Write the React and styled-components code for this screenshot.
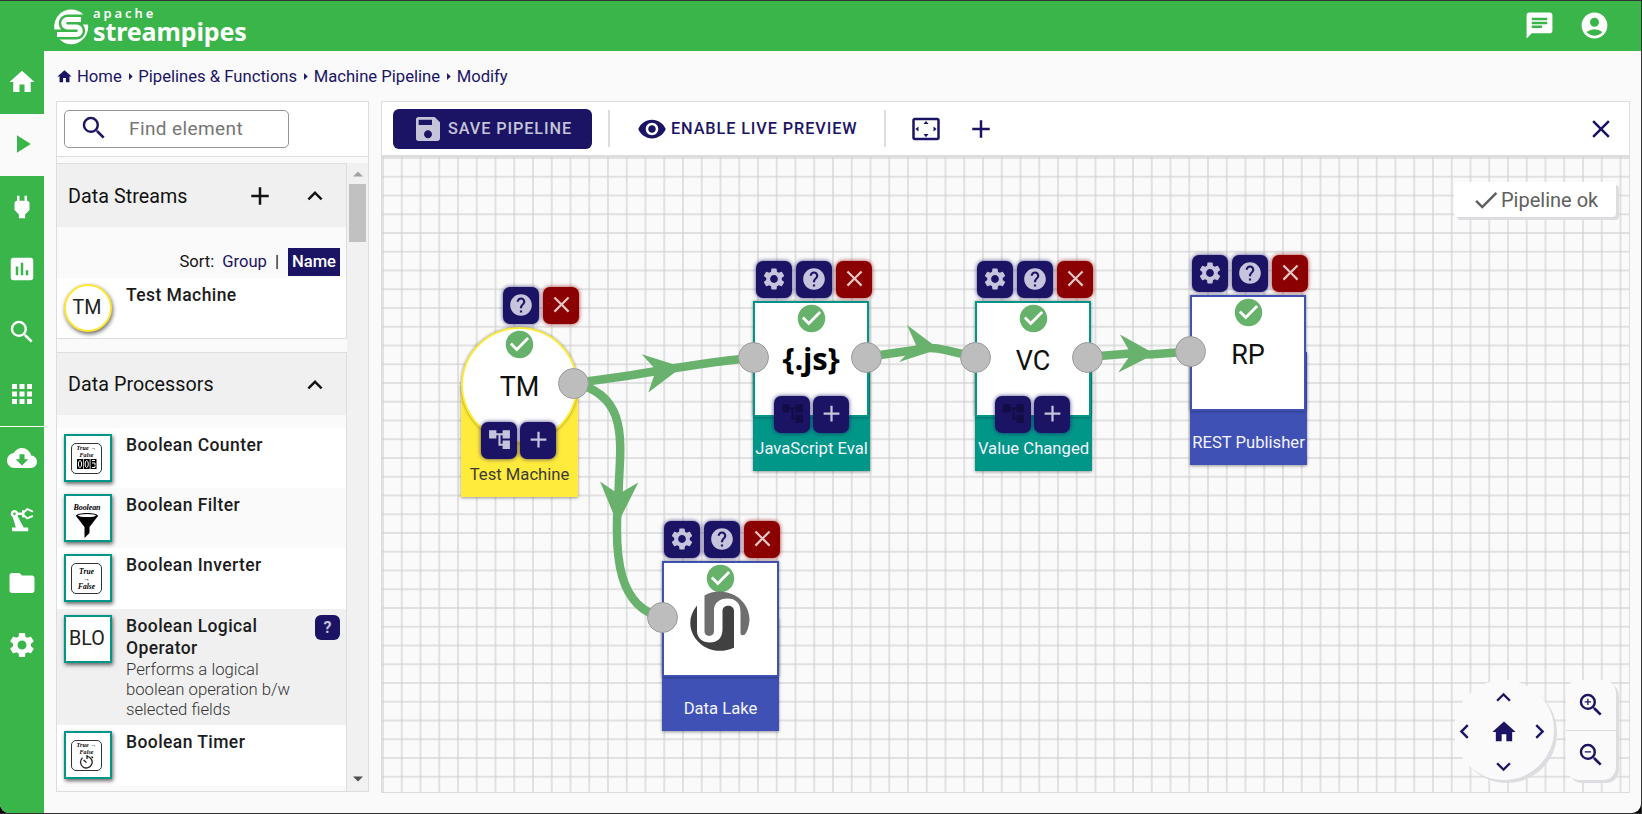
import React from "react";
import styled, { createGlobalStyle, css } from "styled-components";
import {
  MdAccountCircle, MdAccountTree, MdAdd, MdApps, MdArrowRight, MdChat, MdCheckCircle, MdClose,
  MdCloudDownload, MdDone, MdFolder, MdHelp, MdHome, MdInsertChart, MdKeyboardArrowDown,
  MdKeyboardArrowLeft, MdKeyboardArrowRight, MdKeyboardArrowUp, MdPlayArrow, MdPower,
  MdPrecisionManufacturing, MdRemoveRedEye, MdSave, MdSearch, MdSettings, MdSettingsOverscan,
  MdZoomIn, MdZoomOut,
} from "react-icons/md";

const green = "#39b54a";
const navy = "#1b1464";
const line = "#dddddd";
const edgeGreen = "#69b26d";

const GlobalStyle = createGlobalStyle`
  * { box-sizing: border-box; }
  body { margin: 0; background: #1e1e1e; font-family: Roboto, "Liberation Sans", sans-serif; color: #121212; }
  svg { display: block; flex: none; }
`;

const Window = styled.div`
  width: 1642px;
  height: 814px;
  padding: 1px 1px 1px 0;
  background: #333;
  display: flex;
`;
const Shell = styled.div`
  flex: 1;
  display: flex;
  flex-direction: column;
  overflow: hidden;
  border-radius: 0 0 9px 9px;
  background: #fafafa;
  box-shadow: 0 8px 0 8px #000;
  clip-path: inset(0);
`;
const Header = styled.header`
  height: 50px;
  flex: none;
  background: ${green};
  color: #fff;
  display: flex;
  align-items: center;
  padding: 0 31px 0 54px;
`;
const Brand = styled.div`
  display: flex;
  align-items: flex-start;
  gap: 4px;
  flex: 1;
  height: 50px;
  padding-top: 8px;
`;
const BrandText = styled.div`
  display: flex;
  flex-direction: column;
  font-family: "Noto Sans", sans-serif;
  font-weight: 600;
  line-height: 1;
`;
const BrandTop = styled.span`
  font-size: 13px;
  line-height: 12px;
  letter-spacing: 2.9px;
  margin-top: -2px;
`;
const BrandName = styled.span`
  font-size: 25px;
  font-weight: 700;
  line-height: 22px;
  letter-spacing: -0.1px;
  margin-top: 1px;
`;
const HeaderIcons = styled.div`
  display: flex;
  gap: 24px;
  padding-bottom: 2px;
`;
const Body = styled.div`
  flex: 1;
  display: flex;
  min-height: 0;
`;
const Sidebar = styled.nav`
  width: 44px;
  background: ${green};
  display: flex;
  flex-direction: column;
`;
const NavItem = styled.div`
  height: 62.5px;
  display: flex;
  align-items: center;
  justify-content: center;
  padding-bottom: 1px;
  color: ${(p) => (p.$active ? green : "#fff")};
  background: ${(p) => (p.$active ? "#fafafa" : "transparent")};
`;
const NavLine = styled.div`
  height: 1px;
  background: #fff;
`;
const Main = styled.main`
  flex: 1;
  display: flex;
  flex-direction: column;
  padding: 0 11px 20px 12px;
  min-width: 0;
`;
const Crumbs = styled.div`
  height: 50px;
  display: flex;
  align-items: center;
  color: ${navy};
  font-size: 16.65px;
`;
const CrumbText = styled.span`
  margin-left: ${(p) => p.$gap || 0}px;
`;
const CrumbSep = styled.span`
  width: 16.5px;
  display: flex;
  justify-content: center;
`;
const Columns = styled.div`
  flex: 1;
  display: flex;
  gap: 12px;
  min-height: 0;
`;
const Panel = styled.section`
  border: 1px solid ${line};
  display: flex;
  flex-direction: column;
  min-width: 0;
  overflow: hidden;
  ${(p) => (p.$grow ? css`flex: 1;` : css`width: 313px; margin-bottom: 1px;`)}
`;
const SearchBar = styled.div`
  height: 55px;
  flex: none;
  background: #fff;
  border-bottom: 1px solid ${line};
  padding: 8px 7px;
`;
const SearchBox = styled.div`
  width: 225px;
  height: 38px;
  border: 1px solid #949494;
  border-radius: 5px;
  display: flex;
  align-items: center;
  padding: 0 0 2px 14px;
  gap: 20px;
  color: #757575;
  font-size: 19px;
  letter-spacing: 0.4px;
  svg { color: ${navy}; }
`;
const ListArea = styled.div`
  flex: 1;
  display: flex;
  min-height: 0;
  padding-top: 6px;
`;
const ListColumn = styled.div`
  flex: 1;
  display: flex;
  flex-direction: column;
  overflow: hidden;
`;
const Group = styled.div`
  border: 1px solid ${line};
  border-left: 0;
  flex: none;
  & + & { margin-top: 13px; }
`;
const GroupHead = styled.div`
  height: ${(p) => p.$h}px;
  background: #f0f0f0;
  display: flex;
  align-items: center;
  font-size: 19.7px;
  letter-spacing: 0.05px;
  padding: 1px 16px 0 11px;
  span { flex: 1; }
  svg + svg { margin-left: 25px; }
`;
const SortRow = styled.div`
  height: 51px;
  display: flex;
  align-items: flex-end;
  justify-content: flex-end;
  padding: 0 6px 2px;
  font-size: 16.6px;
  line-height: 28px;
`;
const SortLink = styled.span`
  color: ${navy};
  margin: 0 8px;
`;
const SortActive = styled.span`
  background: ${navy};
  color: #fff;
  font-weight: 500;
  padding: 0 4px;
  margin-left: 9px;
`;
const Spacer = styled.div`
  height: 13px;
`;
const Item = styled.div`
  display: flex;
  align-items: flex-start;
  height: ${(p) => p.$h || 60}px;
  background: ${(p) => p.$bg || "#fff"};
  padding: 6px 6px 0 7px;
`;
const Thumb = styled.div`
  width: 48px;
  height: 48px;
  flex: none;
  border: 2px solid ${(p) => (p.$round ? "#fde735" : "#009688")};
  border-radius: ${(p) => (p.$round ? "50%" : "0")};
  box-shadow: 1px 2px 4px rgba(0, 0, 0, 0.6);
  background: #fff;
  color: #212121;
  font-size: 19.7px;
  display: flex;
  align-items: center;
  justify-content: center;
  padding: 0 2px 1px 0;
`;
const ItemText = styled.div`
  flex: 1;
  margin-left: 14px;
`;
const ItemTitle = styled.div`
  font-size: 17.5px;
  font-weight: 500;
  line-height: 22px;
  letter-spacing: 0.42px;
  color: #1c1c1c;
`;
const ItemDesc = styled.div`
  font-size: 16.7px;
  font-weight: 300;
  line-height: 20px;
  width: 176px;
  margin-top: 1px;
  color: #333;
`;
const HelpBadge = styled.div`
  width: 25px;
  height: 25px;
  border-radius: 6px;
  background: ${navy};
  color: #c4c1d9;
  font-weight: 700;
  font-size: 16px;
  display: flex;
  align-items: center;
  justify-content: center;
`;
const Scrollbar = styled.div`
  width: 21px;
  background: #f1f1f1;
  display: flex;
  flex-direction: column;
  align-items: center;
  padding-bottom: 2px;
`;
const ScrollArrow = styled.div`
  height: 21px;
  display: flex;
  align-items: center;
`;
const ScrollThumb = styled.div`
  width: 17px;
  height: 58px;
  background: #c1c1c1;
  margin-bottom: auto;
`;

const Toolbar = styled.div`
  height: 55px;
  flex: none;
  background: #fff;
  border-bottom: 2px solid ${line};
  display: flex;
  align-items: center;
  padding: 0 13px 0 11px;
  color: ${navy};
`;
const ToolButton = styled.div`
  height: 40px;
  width: ${(p) => p.$w}px;
  display: flex;
  align-items: center;
  gap: 4px;
  padding-left: 19px;
  border-radius: 6px;
  font-size: 16.25px;
  font-weight: 500;
  letter-spacing: 0.9px;
  white-space: nowrap;
  ${(p) => p.$solid && css`background: ${navy}; color: #c6c4d8;`}
`;
const Divider = styled.div`
  width: 2px;
  height: 37px;
  background: ${line};
  margin: 0 ${(p) => p.$after}px 0 ${(p) => p.$before}px;
`;
const IconGap = styled.div`
  width: ${(p) => p.$w || 25}px;
  flex: ${(p) => (p.$fill ? 1 : "none")};
`;

const Canvas = styled.div`
  flex: 1;
  position: relative;
  background-image: linear-gradient(to right, rgba(208, 208, 208, 0.6) 1.8px, transparent 1.8px),
    linear-gradient(to bottom, rgba(208, 208, 208, 0.6) 1.8px, transparent 1.8px);
  background-size: 18.75px 18.75px;
`;
const Edges = styled.svg`
  position: absolute;
  left: 0;
  top: 0;
  overflow: visible;
`;
const NodeBox = styled.div`
  position: absolute;
  left: ${(p) => p.$x}px;
  top: ${(p) => p.$y}px;
  width: 117px;
  height: 170px;
  display: flex;
  flex-direction: column;
  align-items: center;
  &::before {
    content: "";
    position: absolute;
    inset: 57px 0 0;
    background: ${(p) => p.$color};
    box-shadow: 0 1px 3px rgba(0, 0, 0, 0.4);
  }
`;
const NodeFace = styled.div`
  position: relative;
  align-self: flex-start;
  width: ${(p) => (p.$wide ? 117 : 116)}px;
  height: 116px;
  background: #fff;
  border: 2px solid ${(p) => p.$color};
  border-radius: ${(p) => (p.$round ? "50%" : 0)};
  box-shadow: 0 0 3px rgba(0, 0, 0, 0.45);
  display: flex;
  flex-direction: column;
  align-items: center;
  font-size: 27px;
  > svg:first-child { color: #67b26b; flex: none; margin-top: -1px; }
`;
const FaceText = styled.div`
  margin-top: ${(p) => (p.$code ? 1 : 10)}px;
  line-height: 32px;
  color: #111;
  ${(p) => p.$code && css`
    font: 700 31px/44px "Open Sans", sans-serif;
    color: #000;
    letter-spacing: -0.2px;
  `}
`;
const NodeLabel = styled.div`
  position: relative;
  margin-top: 22px;
  font-size: 16.65px;
  line-height: 20px;
  white-space: nowrap;
  color: ${(p) => p.$c};
`;
const TopActions = styled.div`
  position: absolute;
  top: ${(p) => p.$y}px;
  right: ${(p) => p.$r}px;
  display: flex;
  gap: 4px;
`;
const BottomActions = styled(TopActions)`
  gap: 3px;
`;
const Action = styled.div`
  width: 36px;
  height: 37px;
  border-radius: 7px;
  display: flex;
  align-items: center;
  justify-content: center;
  padding-bottom: 2px;
  background: ${(p) => (p.$danger ? "#8b0000" : navy)};
  color: ${(p) => (p.$off ? "#120d45" : p.$danger ? "#e2c6c6" : "#c6c3dc")};
  box-shadow: 0 0 4px ${(p) => (p.$danger ? "rgba(139,0,0,.8)" : "rgba(27,20,100,.8)")};
`;
const Port = styled.div`
  position: absolute;
  left: ${(p) => p.$x - 15.5}px;
  top: ${(p) => p.$y - 15.5}px;
  width: 31px;
  height: 31px;
  border-radius: 50%;
  background: #bdbdbd;
  border: 1px solid #9b9b9b;
`;
const Status = styled.div`
  position: absolute;
  right: 13px;
  top: 25px;
  width: 162px;
  height: 35px;
  border-radius: 4px;
  background: #fff;
  box-shadow: 3px 3px 0 #dcdce1;
  color: #606060;
  display: flex;
  align-items: center;
  padding-left: 17px;
  font-size: 20px;
`;
const PanControl = styled.div`
  position: absolute;
  right: 75px;
  bottom: 12px;
  width: 100px;
  height: 100px;
  border-radius: 50%;
  background: #fafafa;
  box-shadow: 3px 3px 0 #dcdde1;
  color: ${navy};
  display: grid;
  grid-template-columns: 21px 57px 14px;
  grid-template-rows: 34px 35px 34px;
  place-items: center;
`;
const ZoomControl = styled.div`
  position: absolute;
  right: 13px;
  bottom: 12px;
  width: 50px;
  height: 100px;
  border-radius: 13px;
  background: #fafafa;
  box-shadow: 3px 3px 0 #dcdde1;
  color: ${navy};
  display: flex;
  flex-direction: column;
`;
const ZoomButton = styled.div`
  flex: 1;
  display: flex;
  align-items: center;
  justify-content: center;
  & + & { border-top: 1px solid ${line}; }
`;

const Logo = () => (
  <svg width="35" height="36" viewBox="0 0 35 36">
    <ellipse cx="17.2" cy="17.8" rx="17" ry="17.4" fill="#fff" />
    <path d="M36 10.500H13.500a3.750 3.750 0 0 0 0 7.500H22.500a3.750 3.750 0 0 1 0 7.500H-1" fill="none" stroke={green} strokeWidth="10" />
    <path d="M27 10.500H13.500a3.750 3.750 0 0 0 0 7.500H22.500a3.750 3.750 0 0 1 0 7.500H3" fill="none" stroke="#fff" strokeWidth="5" />
  </svg>
);

const thumbText = { fontFamily: "Liberation Serif, serif", fontStyle: "italic", fontWeight: 700, textAnchor: "middle" };

const ThumbArt = ({ kind }) => (
  <svg width="42" height="44" viewBox="0 0 42 44" {...thumbText} fill="#000">
    {kind !== "filter" && <rect x="5.500" y="7.500" width="30" height="30" rx="4.500" fill="none" stroke="#333" />}
    {kind === "filter" && (
      <>
        <text x="21" y="13.500" fontSize="8" textLength="27">Boolean</text>
        <path d="M10 20c0-4 22-4 22 0l-8.500 11v6l-5 5V31z" />
        <ellipse cx="21" cy="19.600" rx="9" ry="1.500" fill="#fff" />
      </>
    )}
    {kind === "inverter" && (
      <>
        <text x="20.500" y="17.500" fontSize="7.500" textLength="15">True</text>
        <text x="20.500" y="25" fontSize="7">→</text>
        <text x="20.500" y="33" fontSize="7.500" textLength="17">False</text>
      </>
    )}
    {(kind === "counter" || kind === "timer") && (
      <>
        <text x="20.500" y="14" fontSize="6" textLength="20">True →</text>
        <text x="20.500" y="20.500" fontSize="6" textLength="14">False</text>
      </>
    )}
    {kind === "counter" && (
      <>
        <path d="M11 23h6v10h-6zM17.700 23h6v10h-6zM24.500 23h6v10h-6z" />
        <g fill="none" stroke="#fff" strokeWidth="1">
          <ellipse cx="14" cy="28" rx="1.600" ry="3.500" />
          <ellipse cx="20.700" cy="28" rx="1.600" ry="3.500" />
          <path d="M26 24.500h3M26 27h3v2M26 31.500h3v-2" />
        </g>
      </>
    )}
    {kind === "timer" && (
      <g fill="none" stroke="#222" strokeWidth="1.300">
        <path d="M16.500 24.800a5.800 5.800 0 1 0 4.500-1.400M21 22v4M17.500 27l3 2.500M25.500 23.500l1.500 1.500" />
      </g>
    )}
  </svg>
);

const LakeFigure = styled.svg`
  margin: -4px 3px 0 0;
`;

const LakeLogo = () => (
  <LakeFigure width="62" height="60" viewBox="0 0 62 60">
    <path fill="#6f6f6f" d="M16.500 4.500C32-5 60 3 61.500 28c0 6-2 11-3.500 14-1.500 3-5.500 3-5.500 0V21c0-9-5-13.500-13-13.500S26 12 26 19v21c0 6.500-9.500 6.500-9.500 0z" />
    <path fill="#414141" d="M9 14.500C-4 30 3 50 20 57.500c8 3.500 18 3 26-.8V20c0-7-11.500-7-11.500 0v18c0 9-5 13.500-12.500 13.500S9 47 9 40z" />
  </LakeFigure>
);

function Node({ x, y, color, label, labelColor = "#f4f4ff", round, text, code, logo, settings, extend, extendOff, actionsY = -40, shift = 1 }) {
  return (
    <NodeBox $x={x} $y={y} $color={color}>
      <NodeFace $color={color} $round={round} $wide={round || logo}>
        <MdCheckCircle size={33} />
        {logo ? <LakeLogo /> : <FaceText $code={code}>{text}</FaceText>}
      </NodeFace>
      <NodeLabel $c={labelColor}>{label}</NodeLabel>
      <TopActions $y={actionsY} $r={-2 + shift}>
        {settings && <Action><MdSettings size={26} /></Action>}
        <Action><MdHelp size={26} /></Action>
        <Action $danger><MdClose size={27} /></Action>
      </TopActions>
      {extend && (
        <BottomActions $y={95} $r={21 + shift}>
          <Action $off={extendOff}><MdAccountTree size={25} /></Action>
          <Action><MdAdd size={27} /></Action>
        </BottomActions>
      )}
    </NodeBox>
  );
}

const PipelineEdges = () => (
  <Edges width="1247" height="635" viewBox="382 157 1247 635">
    <g fill="none" stroke={edgeGreen} strokeWidth="8.500">
      <path d="M573 383C640 376 690 363 753 358" />
      <path d="M573 383C633 395 619 450 618.500 495C613 560 620 608 662 617" />
      <path d="M866 357L915 350Q930 346 945 350L975 357" />
      <path d="M1087 357L1130 353.500L1150 354.500L1190 351.500" />
    </g>
    <g fill={edgeGreen}>
      <path d="M641.700 354.300L682 367L648.300 392.500L656 370z" />
      <path d="M600 481.500L618.500 494L638.300 482.500L622 515L617.500 523L613 513z" />
      <path d="M907 325L939 349L899 362L916 345z" />
      <path d="M1120 334.500L1155 354L1118.300 372.500L1131 354z" />
    </g>
  </Edges>
);

const PORTS = [[573, 383], [753.3, 357.3], [866, 357.3], [975.3, 357.3], [1087.3, 357.3], [1190.5, 351.5], [662.3, 617.3]];

const PROCESSORS = [
  { name: "Boolean Counter", art: "counter" },
  { name: "Boolean Filter", art: "filter", bg: "#fafafa" },
  { name: "Boolean Inverter", art: "inverter", h: 61 },
  { name: "Boolean Logical Operator", initials: "BLO", bg: "#f0f0f0", h: 116, desc: "Performs a logical boolean operation b/w selected fields" },
  { name: "Boolean Timer", art: "timer" },
];

const NAV_TOP = [MdHome, MdPlayArrow, MdPower, MdInsertChart, MdSearch, MdApps];
const NAV_BOTTOM = [MdCloudDownload, MdPrecisionManufacturing, MdFolder, MdSettings];
const CRUMBS = ["Home", "Pipelines & Functions", "Machine Pipeline", "Modify"];

export default function App() {
  return (
    <Window>
      <GlobalStyle />
      <Shell>
        <Header>
          <Brand>
            <Logo />
            <BrandText>
              <BrandTop>apache</BrandTop>
              <BrandName>streampipes</BrandName>
            </BrandText>
          </Brand>
          <HeaderIcons>
            <MdChat size={31} />
            <MdAccountCircle size={31} />
          </HeaderIcons>
        </Header>
        <Body>
          <Sidebar>
            {NAV_TOP.map((Icon, i) => (
              <NavItem key={i} $active={i === 1}><Icon size={30} /></NavItem>
            ))}
            <NavLine />
            {NAV_BOTTOM.map((Icon, i) => (
              <NavItem key={i}><Icon size={30} /></NavItem>
            ))}
          </Sidebar>
          <Main>
            <Crumbs>
              <MdHome size={17} />
              {CRUMBS.map((c, i) => (
                <React.Fragment key={c}>
                  {i > 0 && <CrumbSep><MdArrowRight size={17} /></CrumbSep>}
                  <CrumbText $gap={i === 0 ? 4 : 0}>{c}</CrumbText>
                </React.Fragment>
              ))}
            </Crumbs>
            <Columns>
              <Panel>
                <SearchBar>
                  <SearchBox><MdSearch size={30} />Find element</SearchBox>
                </SearchBar>
                <ListArea>
                  <ListColumn>
                    <Group>
                      <GroupHead $h={63}>
                        <span>Data Streams</span>
                        <MdAdd size={30} />
                        <MdKeyboardArrowUp size={30} />
                      </GroupHead>
                      <SortRow>
                        Sort:<SortLink>Group</SortLink>|<SortActive>Name</SortActive>
                      </SortRow>
                      <Item>
                        <Thumb $round>TM</Thumb>
                        <ItemText><ItemTitle>Test Machine</ItemTitle></ItemText>
                      </Item>
                    </Group>
                    <Group>
                      <GroupHead $h={62}>
                        <span>Data Processors</span>
                        <MdKeyboardArrowUp size={30} />
                      </GroupHead>
                      <Spacer />
                      {PROCESSORS.map((p) => (
                        <Item key={p.name} $h={p.h} $bg={p.bg}>
                          <Thumb>{p.initials || <ThumbArt kind={p.art} />}</Thumb>
                          <ItemText>
                            <ItemTitle>{p.name}</ItemTitle>
                            {p.desc && <ItemDesc>{p.desc}</ItemDesc>}
                          </ItemText>
                          {p.desc && <HelpBadge>?</HelpBadge>}
                        </Item>
                      ))}
                      <Spacer />
                    </Group>
                  </ListColumn>
                  <Scrollbar>
                    <ScrollArrow>
                      <svg width="10" height="6"><path d="M0 5.500L5 0.500L10 5.500z" fill="#a3a3a3" /></svg>
                    </ScrollArrow>
                    <ScrollThumb />
                    <ScrollArrow>
                      <svg width="10" height="6"><path d="M0 .5L5 5.500L10 .5z" fill="#505050" /></svg>
                    </ScrollArrow>
                  </Scrollbar>
                </ListArea>
              </Panel>
              <Panel $grow>
                <Toolbar>
                  <ToolButton $solid $w={199}><MdSave size={32} />SAVE PIPELINE</ToolButton>
                  <Divider $before={16} $after={8} />
                  <ToolButton $w={250}><MdRemoveRedEye size={30} />ENABLE LIVE PREVIEW</ToolButton>
                  <Divider $before={16} $after={25} />
                  <MdSettingsOverscan size={30} />
                  <IconGap />
                  <MdAdd size={30} />
                  <IconGap $fill />
                  <MdClose size={30} />
                </Toolbar>
                <Canvas>
                  <Node x={79} y={170} color="#ffeb3b" round text="TM" label="Test Machine" labelColor="#3b3b3b" extend />
                  <Node x={371} y={144} color="#009688" code text="{.js}" label="JavaScript Eval" settings extend extendOff shift={0} />
                  <Node x={593} y={144} color="#009688" text="VC" label="Value Changed" settings extend extendOff />
                  <Node x={808} y={138} color="#3f51b5" text="RP" label="REST Publisher" settings />
                  <Node x={280} y={404} color="#3f51b5" logo label="Data Lake" settings />
                  <PipelineEdges />
                  {PORTS.map(([px, py]) => <Port key={px} $x={px - 382} $y={py - 157} />)}
                  <Status><MdDone size={30} />Pipeline ok</Status>
                  <PanControl>
                    <span /><MdKeyboardArrowUp size={29} /><span />
                    <MdKeyboardArrowLeft size={29} /><MdHome size={28} /><MdKeyboardArrowRight size={29} />
                    <span /><MdKeyboardArrowDown size={29} /><span />
                  </PanControl>
                  <ZoomControl>
                    <ZoomButton><MdZoomIn size={30} /></ZoomButton>
                    <ZoomButton><MdZoomOut size={30} /></ZoomButton>
                  </ZoomControl>
                </Canvas>
              </Panel>
            </Columns>
          </Main>
        </Body>
      </Shell>
    </Window>
  );
}
